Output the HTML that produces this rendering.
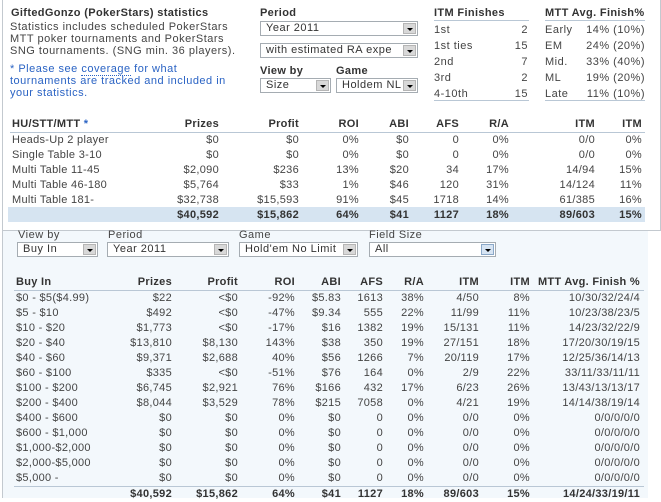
<!DOCTYPE html>
<html><head><meta charset="utf-8"><style>
*{margin:0;padding:0;box-sizing:border-box}
body{width:661px;height:498px;overflow:hidden;background:#fff;font-family:"Liberation Sans","DejaVu Sans",sans-serif;font-size:11px;color:#444;position:relative;letter-spacing:.5px}
.a{position:absolute;white-space:nowrap}
.b{font-weight:bold;color:#333;letter-spacing:.35px}
.top{position:absolute;left:2px;top:0;width:659px;height:231px;border:1px solid #c3c9cf;border-top:none;background:#fff}
.bot{position:absolute;left:2px;top:231px;width:646px;height:267px;background:#f3f8fc;border-left:1px solid #c3c9cf}
.sel{position:absolute;height:15px;border:1px solid #a5acb2;background:#fff;font-size:11px;line-height:13px;padding-left:5px;color:#333;overflow:hidden;white-space:nowrap}
.sel i{position:absolute;right:1px;top:1px;width:13px;height:11px;background:#d8d8d8;border:1px solid #b5b5b5}
.sel i:after{content:"";position:absolute;left:3px;top:4px;border-left:3px solid transparent;border-right:3px solid transparent;border-top:3px solid #000}
.sel i.bl{background:#d6e4f3;border-color:#8aa8c8}
table{position:absolute;border-collapse:collapse;table-layout:fixed}
td{height:15px;padding:0;text-align:right;white-space:nowrap;line-height:15px;letter-spacing:.3px}
td.l{text-align:left;padding-left:2px}
tr.h td{font-weight:bold;color:#333;border-bottom:1px solid #b9c7d5}
tr.t td{font-weight:bold;color:#333}
.blue{color:#2a63c4}
</style></head><body>
<div class="top"></div>
<div class="bot"></div>

<div class="a b" style="left:11px;top:7px">GiftedGonzo (PokerStars) statistics</div>
<div class="a" style="left:10px;top:21px;line-height:12px">Statistics includes scheduled PokerStars<br>MTT poker tournaments and PokerStars<br>SNG tournaments. (SNG min. 36 players).</div>
<div class="a blue" style="left:10px;top:63px;line-height:12px">* Please see <span style="border-bottom:1px dotted #2a63c4">coverage</span> for what<br>tournaments are tracked and included in<br>your statistics.</div>

<div class="a b" style="left:260px;top:7px">Period</div>
<div class="sel" style="left:260px;top:21px;width:158px">Year 2011<i></i></div>
<div class="sel" style="left:260px;top:43px;width:158px">with estimated RA expe<i></i></div>
<div class="a b" style="left:260px;top:65px">View by</div>
<div class="sel" style="left:260px;top:78px;width:71px">Size<i></i></div>
<div class="a b" style="left:336px;top:65px">Game</div>
<div class="sel" style="left:336px;top:78px;width:82px">Holdem NL<i></i></div>

<div class="a b" style="left:434px;top:7px">ITM Finishes</div>
<div class="a" style="left:434px;top:20px;width:95px;height:81px;border-top:1px solid #b9c7d5;border-bottom:1px solid #b9c7d5"></div>
<div class="a" style="left:434px;top:22px;line-height:16px">1st<br>1st ties<br>2nd<br>3rd<br>4-10th</div>
<div class="a" style="left:499px;top:22px;width:29px;text-align:right;line-height:16px">2<br>15<br>7<br>2<br>15</div>
<div class="a b" style="left:545px;top:7px">MTT Avg. Finish%</div>
<div class="a" style="left:545px;top:20px;width:100px;height:81px;border-top:1px solid #b9c7d5;border-bottom:1px solid #b9c7d5"></div>
<div class="a" style="left:545px;top:22px;line-height:16px">Early<br>EM<br>Mid.<br>ML<br>Late</div>
<div class="a" style="left:575px;top:22px;width:70px;text-align:right;line-height:16px">14% (10%)<br>24% (20%)<br>33% (40%)<br>19% (20%)<br>11% (10%)</div>

<div class="a" style="left:8px;top:207px;width:637px;height:15px;background:#d6e4f1"></div>
<table style="left:10px;top:117px;width:635px">
<colgroup><col style="width:150px"><col style="width:59px"><col style="width:80px"><col style="width:60px"><col style="width:50px"><col style="width:50px"><col style="width:50px"><col style="width:86px"><col style="width:47px"><col style="width:3px"></colgroup>
<tr class="h"><td class="l">HU/STT/MTT <span class="blue">*</span></td><td>Prizes</td><td>Profit</td><td>ROI</td><td>ABI</td><td>AFS</td><td>R/A</td><td>ITM</td><td>ITM</td><td></td></tr>
<tr><td class="l">Heads-Up 2 player</td><td>$0</td><td>$0</td><td>0%</td><td>$0</td><td>0</td><td>0%</td><td>0/0</td><td>0%</td><td></td></tr>
<tr><td class="l">Single Table 3-10</td><td>$0</td><td>$0</td><td>0%</td><td>$0</td><td>0</td><td>0%</td><td>0/0</td><td>0%</td><td></td></tr>
<tr><td class="l">Multi Table 11-45</td><td>$2,090</td><td>$236</td><td>13%</td><td>$20</td><td>34</td><td>17%</td><td>14/94</td><td>15%</td><td></td></tr>
<tr><td class="l">Multi Table 46-180</td><td>$5,764</td><td>$33</td><td>1%</td><td>$46</td><td>120</td><td>31%</td><td>14/124</td><td>11%</td><td></td></tr>
<tr><td class="l">Multi Table 181-</td><td>$32,738</td><td>$15,593</td><td>91%</td><td>$45</td><td>1718</td><td>14%</td><td>61/385</td><td>16%</td><td></td></tr>
<tr class="t"><td class="l"></td><td>$40,592</td><td>$15,862</td><td>64%</td><td>$41</td><td>1127</td><td>18%</td><td>89/603</td><td>15%</td><td></td></tr>
</table>

<div class="a" style="left:18px;top:229px">View by</div>
<div class="sel" style="left:17px;top:242px;width:81px">Buy In<i></i></div>
<div class="a" style="left:108px;top:229px">Period</div>
<div class="sel" style="left:107px;top:242px;width:122px">Year 2011<i></i></div>
<div class="a" style="left:239px;top:229px">Game</div>
<div class="sel" style="left:239px;top:242px;width:119px">Hold'em No Limit<i></i></div>
<div class="a" style="left:369px;top:229px">Field Size</div>
<div class="sel" style="left:369px;top:242px;width:127px">All<i class="bl"></i></div>

<table style="left:14px;top:275px;width:630px">
<colgroup><col style="width:116px"><col style="width:42px"><col style="width:66px"><col style="width:57px"><col style="width:46px"><col style="width:42px"><col style="width:41px"><col style="width:55px"><col style="width:51px"><col style="width:110px"><col style="width:4px"></colgroup>
<tr class="h"><td class="l">Buy In</td><td>Prizes</td><td>Profit</td><td>ROI</td><td>ABI</td><td>AFS</td><td>R/A</td><td>ITM</td><td>ITM</td><td>MTT Avg. Finish %</td><td></td></tr>
<tr><td class="l">$0 - $5($4.99)</td><td>$22</td><td>&lt;$0</td><td>-92%</td><td>$5.83</td><td>1613</td><td>38%</td><td>4/50</td><td>8%</td><td>10/30/32/24/4</td><td></td></tr>
<tr><td class="l">$5 - $10</td><td>$492</td><td>&lt;$0</td><td>-47%</td><td>$9.34</td><td>555</td><td>22%</td><td>11/99</td><td>11%</td><td>10/23/38/23/5</td><td></td></tr>
<tr><td class="l">$10 - $20</td><td>$1,773</td><td>&lt;$0</td><td>-17%</td><td>$16</td><td>1382</td><td>19%</td><td>15/131</td><td>11%</td><td>14/23/32/22/9</td><td></td></tr>
<tr><td class="l">$20 - $40</td><td>$13,810</td><td>$8,130</td><td>143%</td><td>$38</td><td>350</td><td>19%</td><td>27/151</td><td>18%</td><td>17/20/30/19/15</td><td></td></tr>
<tr><td class="l">$40 - $60</td><td>$9,371</td><td>$2,688</td><td>40%</td><td>$56</td><td>1266</td><td>7%</td><td>20/119</td><td>17%</td><td>12/25/36/14/13</td><td></td></tr>
<tr><td class="l">$60 - $100</td><td>$335</td><td>&lt;$0</td><td>-51%</td><td>$76</td><td>164</td><td>0%</td><td>2/9</td><td>22%</td><td>33/11/33/11/11</td><td></td></tr>
<tr><td class="l">$100 - $200</td><td>$6,745</td><td>$2,921</td><td>76%</td><td>$166</td><td>432</td><td>17%</td><td>6/23</td><td>26%</td><td>13/43/13/13/17</td><td></td></tr>
<tr><td class="l">$200 - $400</td><td>$8,044</td><td>$3,529</td><td>78%</td><td>$215</td><td>7058</td><td>0%</td><td>4/21</td><td>19%</td><td>14/14/38/19/14</td><td></td></tr>
<tr><td class="l">$400 - $600</td><td>$0</td><td>$0</td><td>0%</td><td>$0</td><td>0</td><td>0%</td><td>0/0</td><td>0%</td><td>0/0/0/0/0</td><td></td></tr>
<tr><td class="l">$600 - $1,000</td><td>$0</td><td>$0</td><td>0%</td><td>$0</td><td>0</td><td>0%</td><td>0/0</td><td>0%</td><td>0/0/0/0/0</td><td></td></tr>
<tr><td class="l">$1,000-$2,000</td><td>$0</td><td>$0</td><td>0%</td><td>$0</td><td>0</td><td>0%</td><td>0/0</td><td>0%</td><td>0/0/0/0/0</td><td></td></tr>
<tr><td class="l">$2,000-$5,000</td><td>$0</td><td>$0</td><td>0%</td><td>$0</td><td>0</td><td>0%</td><td>0/0</td><td>0%</td><td>0/0/0/0/0</td><td></td></tr>
<tr style="border-bottom:1px solid #b9c7d5"><td class="l">$5,000 -</td><td>$0</td><td>$0</td><td>0%</td><td>$0</td><td>0</td><td>0%</td><td>0/0</td><td>0%</td><td>0/0/0/0/0</td><td></td></tr>
<tr class="t"><td class="l"></td><td>$40,592</td><td>$15,862</td><td>64%</td><td>$41</td><td>1127</td><td>18%</td><td>89/603</td><td>15%</td><td>14/24/33/19/11</td><td></td></tr>
</table>
</body></html>
